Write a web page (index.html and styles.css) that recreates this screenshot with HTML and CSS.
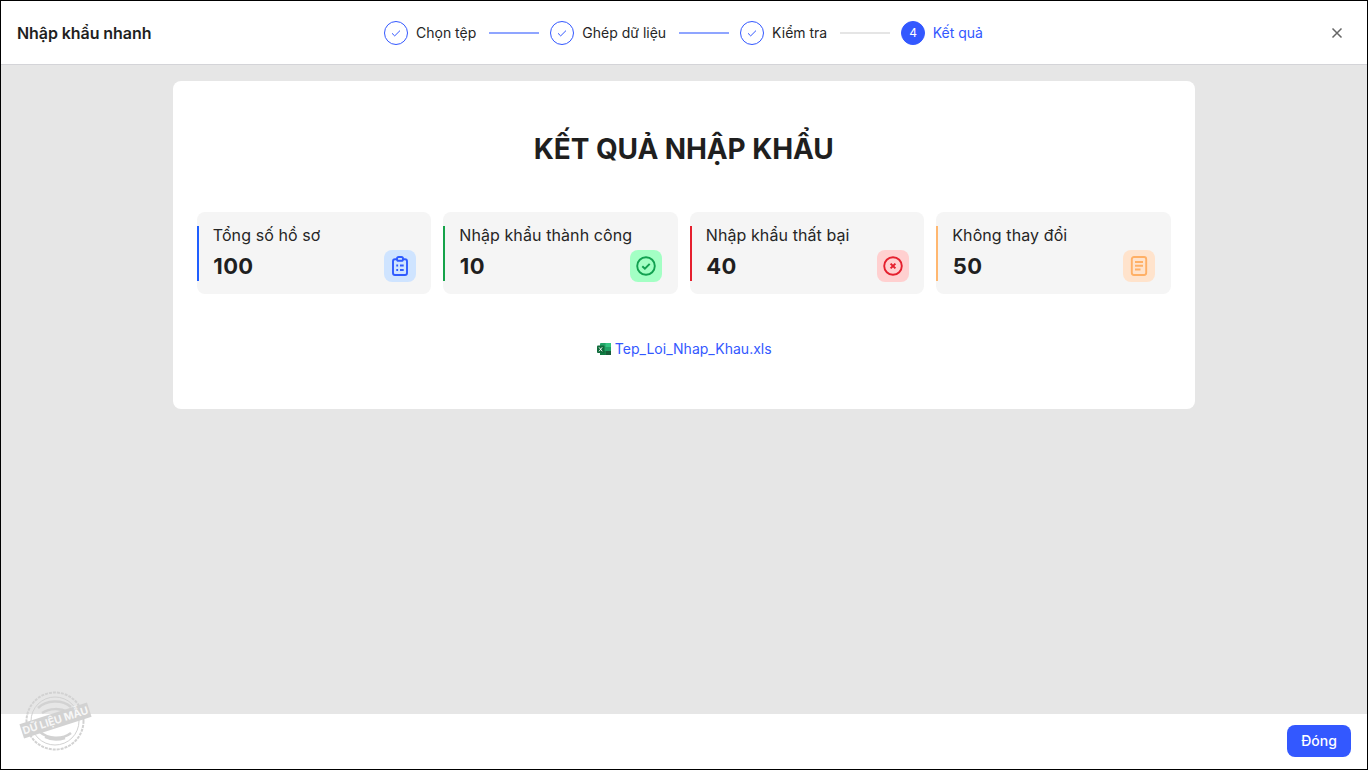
FILE: index.html
```html
<!DOCTYPE html>
<html lang="vi">
<head>
<meta charset="utf-8">
<title>Nhập khẩu nhanh</title>
<link rel="stylesheet" href="styles.css">
</head>
<body>
<div class="app">
  <header class="header">
    <div class="app-title">Nhập khẩu nhanh</div>
    <ol class="steps">
      <li class="step"><span class="step-dot"><svg width="12" height="12" viewBox="0 0 12 12"><path d="M2 6.3l2.7 2.6L10 3.6" fill="none" stroke="#3358ff" stroke-width="1"/></svg></span><span>Chọn tệp</span></li>
      <li class="line done"></li>
      <li class="step"><span class="step-dot"><svg width="12" height="12" viewBox="0 0 12 12"><path d="M2 6.3l2.7 2.6L10 3.6" fill="none" stroke="#3358ff" stroke-width="1"/></svg></span><span>Ghép dữ liệu</span></li>
      <li class="line done"></li>
      <li class="step"><span class="step-dot"><svg width="12" height="12" viewBox="0 0 12 12"><path d="M2 6.3l2.7 2.6L10 3.6" fill="none" stroke="#3358ff" stroke-width="1"/></svg></span><span>Kiểm tra</span></li>
      <li class="line"></li>
      <li class="step current"><span class="step-dot">4</span><span>Kết quả</span></li>
    </ol>
    <button class="close" aria-label="Đóng"><svg width="12" height="12" viewBox="0 0 12 12"><path d="M1.5 1.5l9 9M10.5 1.5l-9 9" stroke="#666" stroke-width="1.5" fill="none"/></svg></button>
  </header>
  <main class="main">
    <section class="card">
      <h1 class="title">KẾT QUẢ NHẬP KHẨU</h1>
      <div class="stats">
        <div class="stat blue">
          <div class="stat-label">Tổng số hồ sơ</div>
          <div class="stat-row">
            <div class="stat-value">100</div>
            <div class="stat-icon"><svg width="20" height="20" viewBox="0 0 20 20" fill="none" stroke="#2f5bff" stroke-width="1.9"><rect x="3" y="3.2" width="14" height="15.8" rx="2"/><rect x="7" y="1" width="6" height="3.8" rx="1.6" fill="#cfe4ff"/><path d="M6.3 9.5h1.8M6.3 14h1.8M10 9.5h3.7M10 14h3.7" stroke-width="2"/></svg></div>
          </div>
        </div>
        <div class="stat green">
          <div class="stat-label">Nhập khẩu thành công</div>
          <div class="stat-row">
            <div class="stat-value">10</div>
            <div class="stat-icon"><svg width="20" height="20" viewBox="0 0 20 20" fill="none" stroke="#12a150" stroke-width="1.9"><circle cx="10" cy="10" r="8.8"/><path d="M6.3 10.2l2.6 2.5 4.8-4.8" stroke-width="2"/></svg></div>
          </div>
        </div>
        <div class="stat red">
          <div class="stat-label">Nhập khẩu thất bại</div>
          <div class="stat-row">
            <div class="stat-value">40</div>
            <div class="stat-icon"><svg width="20" height="20" viewBox="0 0 20 20" fill="none" stroke="#e5202e" stroke-width="1.9"><circle cx="10" cy="10" r="8.8"/><path d="M7.6 7.6l4.8 4.8M12.4 7.6l-4.8 4.8" stroke-width="2"/></svg></div>
          </div>
        </div>
        <div class="stat orange">
          <div class="stat-label">Không thay đổi</div>
          <div class="stat-row">
            <div class="stat-value">50</div>
            <div class="stat-icon"><svg width="20" height="20" viewBox="0 0 20 20" fill="none" stroke="#ffb066" stroke-width="1.9"><rect x="2.8" y="1" width="14.4" height="18" rx="2.2"/><path d="M6 6h8M6 9.8h8M6 13.5h5.5"/></svg></div>
          </div>
        </div>
      </div>
      <a class="file-link" href="#">
        <svg width="14" height="14" viewBox="0 0 14 14"><rect x="3" y="1" width="11" height="12" rx="1" fill="#21a366"/><rect x="8.5" y="1" width="5.5" height="4" fill="#33c481"/><rect x="8.5" y="9" width="5.5" height="4" fill="#185c37"/><rect x="3" y="9" width="5.5" height="4" fill="#107c41"/><rect x="0" y="3.5" width="7.5" height="7.5" rx="1" fill="#0f6b3a"/><path d="M2 5.3l3.2 4M5.2 5.3L2 9.3" stroke="#fff" stroke-width=".9"/></svg>
        <span>Tep_Loi_Nhap_Khau.xls</span>
      </a>
    </section>
  </main>
  <footer class="footer">
    <button class="btn-primary">Đóng</button>
  </footer>
  <div class="stamp" aria-hidden="true">
    <svg width="72" height="62" viewBox="0 0 72 62" fill="none" stroke="#d2d2d2">
      <circle cx="35" cy="30" r="28.5" stroke-width="2" stroke-dasharray="3 1"/>
      <circle cx="35" cy="30" r="24" stroke-width="1"/>
      <path d="M18 17c8-8 24-9 33-1M22 22c8-5 18-5 26-1M20 41c8 7 22 8 31 1M25 46c6 3 14 3 20 1" stroke-width="2.5"/>
    </svg>
    <span class="stamp-label">DỮ LIỆU MẪU</span>
  </div>
</div>
</body>
</html>
```
FILE: styles.css
```css
* { box-sizing: border-box; }
html, body { margin: 0; padding: 0; height: 100%; }
body { font-family: Inter, "Noto Sans", sans-serif; color: #1f1f1f; background: #fff; overflow: hidden; }
.app { position: relative; width: 1368px; height: 770px; border: 1px solid #000; display: flex; flex-direction: column; background: #fff; }
.header { height: 64px; flex: none; display: flex; align-items: center; padding: 0 16px; border-bottom: 1px solid #d4d4d8; position: relative; }
.app-title { font-size: 16px; font-weight: 600; color: #1f1f1f; line-height: 24px; letter-spacing: -.07px; }
.steps { list-style: none; margin: 0; padding: 0; display: flex; align-items: center; position: absolute; left: 383px; top: 20px; height: 24px; }
.step { display: flex; align-items: center; gap: 8px; font-size: 14px; line-height: 24px; color: #262626; white-space: nowrap; }
.step-dot { width: 24px; height: 24px; border-radius: 50%; border: 1px solid #3358ff; display: flex; align-items: center; justify-content: center; background: #fff; font-size: 12px; }
.step.current { color: #3358ff; gap: 7.5px; }
.step.current .step-dot { background: #3358ff; color: #fff; }
.line { width: 50px; height: 2px; margin: 0 11.5px 0 12.5px; background: #e5e5e5; }
.line.done { background: #8fa5ff; }
.close { position: absolute; right: 24px; top: 26px; width: 12px; height: 12px; padding: 0; border: 0; background: none; display: flex; }
.main { flex: 1; background: #e6e6e6; padding: 16px 172px 0; }
.card { height: 328px; background: #fff; border-radius: 8px; padding: 48px 24.25px 0 23.75px; display: flex; flex-direction: column; align-items: center; }
.title { margin: 0; font-size: 28px; line-height: 40px; font-weight: 700; color: #1f1f1f; text-align: center; letter-spacing: -.1px; }
.stats { width: 100%; margin-top: 43px; display: grid; grid-template-columns: repeat(4, 1fr); gap: 12px; }
.stat { position: relative; height: 82px; background: #f5f5f5; border-radius: 8px; padding: 11px 15.5px 0 16px; }
.stat::before { content: ""; position: absolute; left: 0; top: 14px; width: 2px; height: 55px; background: var(--accent); }
.stat-label { font-size: 16px; line-height: 24px; color: #262626; letter-spacing: .09px; }
.stat-row { display: flex; justify-content: space-between; align-items: center; margin-top: 3px; }
.stat-value { font-size: 22px; line-height: 28px; font-weight: 700; color: #1f1f1f; letter-spacing: .4px; padding-left: .5px; }
.stat-icon { width: 32px; height: 32px; border-radius: 8px; background: var(--soft); display: flex; align-items: center; justify-content: center; }
.blue { --accent: #1f5eff; --soft: #cfe4ff; }
.green { --accent: #16a34a; --soft: #a3ffc4; }
.red { --accent: #e5202e; --soft: #ffd0d0; }
.orange { --accent: #ffb770; --soft: #ffe3cc; }
.file-link { margin-top: 44px; padding-left: 1px; display: flex; align-items: center; gap: 4px; font-size: 14px; line-height: 22px; color: #3358ff; text-decoration: none; letter-spacing: .02px; }
.footer { height: 55px; flex: none; background: #fff; display: flex; align-items: center; justify-content: flex-end; padding: 0 16px 2px; }
.btn-primary { width: 64px; height: 32px; border: 0; border-radius: 8px; background: #3358ff; color: #fff; font-family: inherit; font-size: 14px; font-weight: 500; }
.stamp { position: absolute; left: 19px; top: 690px; width: 72px; height: 62px; }
.stamp svg { display: block; }
.stamp-label { position: absolute; left: 0; top: 22px; width: 71px; height: 15px; background: #d2d2d2; color: #f7f7f7; font-size: 10.5px; font-weight: 700; line-height: 15px; text-align: center; white-space: nowrap; transform: rotate(-18deg); }
```
